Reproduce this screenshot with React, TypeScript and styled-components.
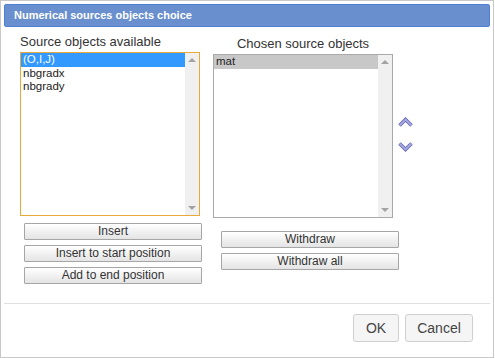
import React from 'react';
import styled, { createGlobalStyle } from 'styled-components';

const GlobalStyle = createGlobalStyle`
  html, body {
    margin: 0;
    padding: 0;
    background: #ffffff;
    font-family: "Liberation Sans", Arial, sans-serif;
  }
`;

const Dialog = styled.div`
  box-sizing: border-box;
  width: 494px;
  height: 358px;
  border: 1px solid #c8c8c8;
  padding: 3px;
  display: flex;
  flex-direction: column;
  background: #fff;
`;

const TitleBar = styled.div`
  box-sizing: border-box;
  height: 23px;
  background: #6a8fce;
  border: 1px solid #4f7fd4;
  border-radius: 2px;
  color: #fff;
  font-weight: bold;
  font-size: 11px;
  line-height: 21px;
  padding-left: 9px;
`;

const Body = styled.div`
  display: flex;
  padding-left: 16px;
  height: 276px;
`;

const Column = styled.div<{ $top: number }>`
  display: flex;
  flex-direction: column;
  width: 180px;
  padding-top: ${(p) => p.$top}px;
`;

const Label = styled.div<{ $center?: boolean }>`
  font-size: 13px;
  line-height: 15px;
  color: #333;
  text-align: ${(p) => (p.$center ? 'center' : 'left')};
  margin-bottom: 3px;
`;

const ListBox = styled.div<{ $focused?: boolean }>`
  box-sizing: border-box;
  height: 164px;
  border: 1px solid ${(p) => (p.$focused ? '#e6a93a' : '#a9a9a9')};
  display: flex;
  background: #fff;
`;

const Items = styled.div`
  flex: 1;
`;

const Item = styled.div<{ $sel?: 'blue' | 'gray' }>`
  font-size: 11.5px;
  line-height: 13.5px;
  padding-left: 2px;
  color: ${(p) => (p.$sel === 'blue' ? '#fff' : '#222')};
  background: ${(p) =>
    p.$sel === 'blue' ? '#3399ff' : p.$sel === 'gray' ? '#c8c8c8' : 'transparent'};
`;

const ScrollBar = styled.div`
  width: 14px;
  background: #f0f0f0;
  display: flex;
  flex-direction: column;
  justify-content: space-between;
  align-items: center;
  padding: 5px 0;
  box-sizing: border-box;
`;

const ScrollArrow = styled.div<{ $down?: boolean }>`
  width: 0;
  height: 0;
  border-left: 4px solid transparent;
  border-right: 4px solid transparent;
  ${(p) =>
    p.$down ? 'border-top: 4px solid #a3a3a3;' : 'border-bottom: 4px solid #a3a3a3;'}
`;

const ButtonGroup = styled.div<{ $top: number; $shift: number }>`
  display: flex;
  flex-direction: column;
  gap: 5px;
  margin-top: ${(p) => p.$top}px;
  margin-left: ${(p) => p.$shift}px;
  width: 178px;
`;

const SmallButton = styled.button`
  box-sizing: border-box;
  height: 17px;
  width: 100%;
  border: 1px solid #a6a6a6;
  border-radius: 1px;
  background: linear-gradient(#ffffff, #e4e4e4);
  font-family: "Liberation Sans", Arial, sans-serif;
  font-weight: 400;
  font-size: 12px;
  color: #333;
  padding: 0;
  line-height: 15px;
`;

const Gap = styled.div`
  width: 13px;
`;

const Movers = styled.div`
  display: flex;
  flex-direction: column;
  gap: 13px;
  padding-top: 90px;
  padding-left: 5px;
`;

const Footer = styled.div`
  border-top: 1px solid #e0e0e0;
  display: flex;
  justify-content: flex-end;
  gap: 6px;
  padding: 10px 17px 0 0;
`;

const DialogButton = styled.button<{ $w: number }>`
  box-sizing: border-box;
  width: ${(p) => p.$w}px;
  height: 28px;
  background: #f5f5f5;
  border: 1px solid #cfcfcf;
  border-radius: 3px;
  font-family: "Liberation Sans", Arial, sans-serif;
  font-weight: 400;
  font-size: 14px;
  color: #444;
  padding: 0;
`;

const Chevron = ({ up }: { up?: boolean }) => {
  const d = up ? 'M1.5 8.5 L7.5 2.5 L13.5 8.5' : 'M1.5 2.5 L7.5 8.5 L13.5 2.5';
  return (
    <svg width="15" height="11" viewBox="0 0 15 11">
      <path d={d} fill="none" stroke="#6a6db4" strokeWidth="3.6" />
      <path d={d} fill="none" stroke="#a4a7e2" strokeWidth="1.8" />
    </svg>
  );
};

export default function App() {
  return (
    <>
      <GlobalStyle />
      <Dialog>
        <TitleBar>Numerical sources objects choice</TitleBar>
        <Body>
          <Column $top={7}>
            <Label>Source objects available</Label>
            <ListBox $focused>
              <Items>
                <Item $sel="blue">(O,I,J)</Item>
                <Item>nbgradx</Item>
                <Item>nbgrady</Item>
              </Items>
              <ScrollBar>
                <ScrollArrow />
                <ScrollArrow $down />
              </ScrollBar>
            </ListBox>
            <ButtonGroup $top={7} $shift={4}>
              <SmallButton>Insert</SmallButton>
              <SmallButton>Insert to start position</SmallButton>
              <SmallButton>Add to end position</SmallButton>
            </ButtonGroup>
          </Column>
          <Gap />
          <Column $top={9}>
            <Label $center>Chosen source objects</Label>
            <ListBox>
              <Items>
                <Item $sel="gray">mat</Item>
              </Items>
              <ScrollBar>
                <ScrollArrow />
                <ScrollArrow $down />
              </ScrollBar>
            </ListBox>
            <ButtonGroup $top={13} $shift={8}>
              <SmallButton>Withdraw</SmallButton>
              <SmallButton>Withdraw all</SmallButton>
            </ButtonGroup>
          </Column>
          <Movers>
            <Chevron up />
            <Chevron />
          </Movers>
        </Body>
        <Footer>
          <DialogButton $w={46}>OK</DialogButton>
          <DialogButton $w={68}>Cancel</DialogButton>
        </Footer>
      </Dialog>
    </>
  );
}
